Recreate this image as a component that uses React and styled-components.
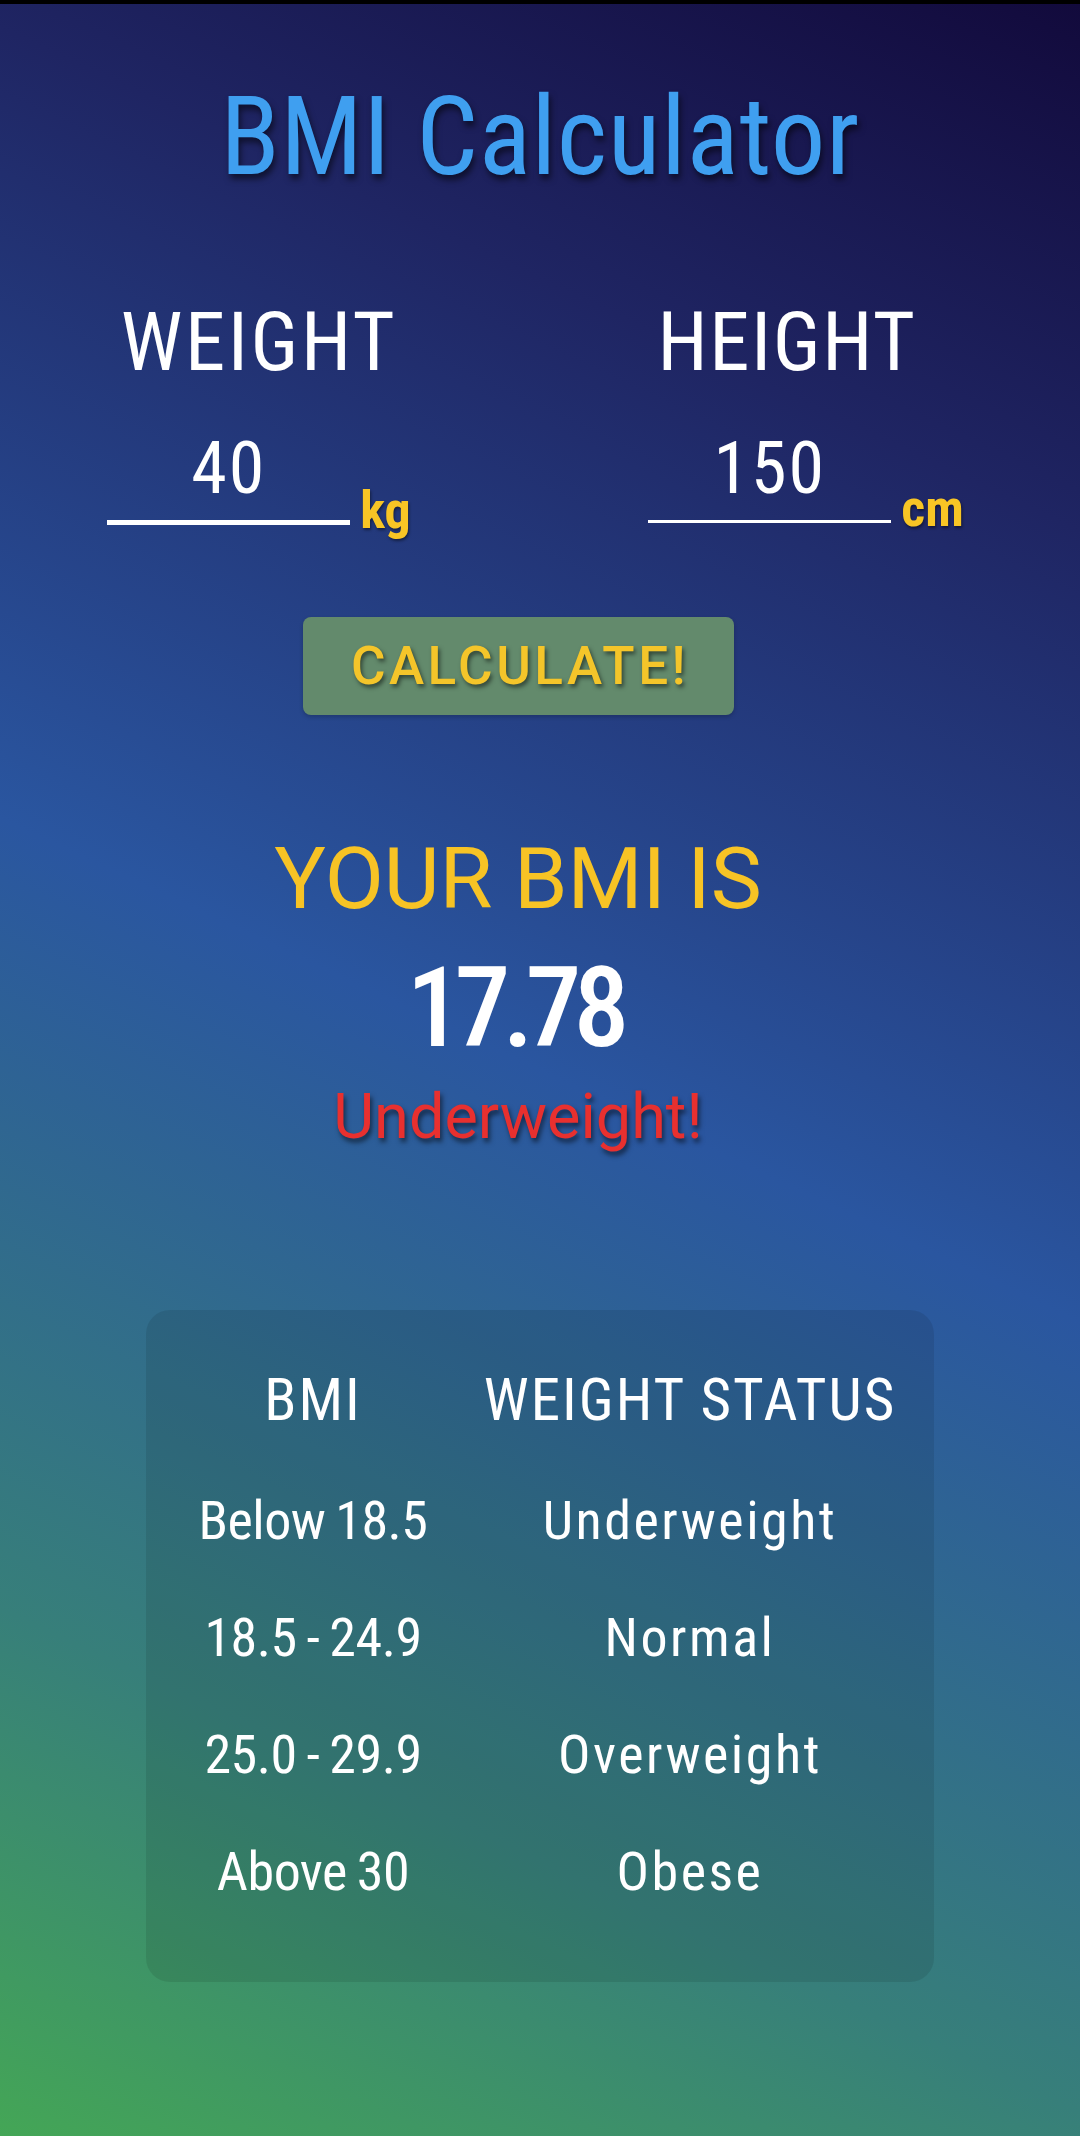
import React, { useState } from "react";
import styled, { createGlobalStyle } from "styled-components";

const NARROW = `"Roboto Condensed", "Liberation Sans Narrow", "DejaVu Sans Condensed", "Liberation Sans", sans-serif`;
const ROBOTO = `Roboto, "Liberation Sans", sans-serif`;

const GlobalStyle = createGlobalStyle`
  *, *::before, *::after { box-sizing: border-box; }
  html, body { margin: 0; padding: 0; }
  body { font-family: ${ROBOTO}; background: #120a3c; }
`;

const Page = styled.div`
  min-height: 100vh;
  border-top: 4px solid #000;
  background: linear-gradient(25deg, #44a656 0%, #377f7a 20%, #2a56a0 50%, #1f2563 80%, #120a3c 100%);
  display: flex;
  flex-direction: column;
  align-items: center;
  padding-bottom: 150px;
`;

const Title = styled.h1`
  margin: 79px 0 0;
  font-family: ${NARROW};
  font-weight: 400;
  font-size: 109px;
  line-height: 1;
  letter-spacing: 0.5px;
  color: #3f9ff0;
  text-shadow: 2px 5px 6px rgba(0, 0, 0, 0.55);
`;

const Main = styled.main`
  align-self: stretch;
  padding-right: 44px;
  display: flex;
  flex-direction: column;
  align-items: center;
`;

const Fields = styled.div`
  align-self: stretch;
  margin-top: 110px;
  display: grid;
  grid-template-columns: 1fr 1fr;
`;

const Field = styled.div`
  display: flex;
  flex-direction: column;
  align-items: center;
  padding-left: ${(p) => p.$offset || 0}px;
`;

const Label = styled.label`
  font-family: ${NARROW};
  font-size: 81px;
  line-height: 1;
  letter-spacing: ${(p) => p.$spacing ?? 2.5}px;
  color: #fff;
`;

const InputRow = styled.div`
  margin-top: 49px;
  margin-left: ${(p) => p.$nudge || 0}px;
  display: flex;
  align-items: flex-end;
  gap: 10px;
`;

const NumberInput = styled.input`
  width: 243px;
  height: ${(p) => 88 + p.$line}px;
  padding: 0 0 16px;
  border: none;
  border-bottom: ${(p) => p.$line}px solid #fff;
  background: transparent;
  outline: none;
  color: #fff;
  font-family: ${NARROW};
  font-size: 72px;
  line-height: 72px;
  letter-spacing: 2px;
  text-align: center;
`;

const Unit = styled.span`
  margin-bottom: -12px;
  font-family: ${NARROW};
  font-weight: 700;
  font-size: 52px;
  line-height: 1;
  color: #f8c525;
  text-shadow: 1px 2px 3px rgba(0, 0, 0, 0.45);
`;

const CalcButton = styled.button`
  margin-top: 92px;
  width: 431px;
  height: 98px;
  display: flex;
  align-items: center;
  justify-content: center;
  border: none;
  border-radius: 8px;
  background: #638a6c;
  box-shadow: 0 2px 4px rgba(0, 0, 0, 0.2);
  cursor: pointer;
  font-family: ${ROBOTO};
  font-weight: 500;
  font-size: 53px;
  line-height: 1;
  letter-spacing: 3.5px;
  padding: 0 0 0 4px;
  color: #f4c52a;
  text-shadow: 2px 3px 4px rgba(0, 0, 0, 0.5);
`;

const ResultLabel = styled.h2`
  margin: 121px 0 0;
  font-family: ${ROBOTO};
  font-weight: 400;
  font-size: 86px;
  line-height: 1;
  color: #f7c325;
`;

const ResultValue = styled.div`
  margin-top: 30px;
  font-family: ${NARROW};
  font-weight: 500;
  font-size: 112px;
  line-height: 1;
  letter-spacing: -8px;
  padding-right: 8px;
  color: #fff;
`;

const ResultStatus = styled.div`
  margin-top: 21px;
  font-family: ${ROBOTO};
  font-size: 63px;
  line-height: 1;
  color: ${(p) => p.$color};
  text-shadow: 2px 4px 5px rgba(0, 0, 0, 0.55);
`;

const Card = styled.section`
  margin-top: 162px;
  width: 788px;
  padding: 60px 0 83px 34px;
  border-radius: 24px;
  background: rgba(0, 0, 0, 0.09);
  display: grid;
  grid-template-columns: 266px 1fr;
  row-gap: 63px;
`;

const HeadCell = styled.div`
  margin-bottom: 2px;
  text-align: center;
  font-family: ${NARROW};
  font-size: 59px;
  line-height: 1;
  letter-spacing: 2px;
  color: #fff;
`;

const Cell = styled.div`
  text-align: center;
  font-family: ${NARROW};
  font-size: 54px;
  line-height: 1;
  letter-spacing: ${(p) => (p.$wide ? 2.5 : -0.5)}px;
  word-spacing: ${(p) => (p.$wide ? 0 : -2)}px;
  color: #fff;
`;

const RANGES = [
  ["Below 18.5", "Underweight"],
  ["18.5 - 24.9", "Normal"],
  ["25.0 - 29.9", "Overweight"],
  ["Above 30", "Obese"],
];

function classify(bmi) {
  if (bmi < 18.5) return { text: "Underweight!", color: "#e8302f" };
  if (bmi < 25) return { text: "Normal!", color: "#4caf50" };
  if (bmi < 30) return { text: "Overweight!", color: "#ff9800" };
  return { text: "Obese!", color: "#e8302f" };
}

export default function App() {
  const [weight, setWeight] = useState("40");
  const [height, setHeight] = useState("150");
  const [bmi, setBmi] = useState(40 / (1.5 * 1.5));

  const calculate = () => {
    const w = parseFloat(weight);
    const h = parseFloat(height) / 100;
    if (w > 0 && h > 0) setBmi(w / (h * h));
  };

  const status = classify(bmi);

  return (
    <>
      <GlobalStyle />
      <Page>
        <Title>BMI Calculator</Title>
        <Main>
          <Fields>
            <Field>
              <Label htmlFor="weight">WEIGHT</Label>
              <InputRow>
                <NumberInput
                  id="weight"
                  inputMode="decimal"
                  $line={5}
                  value={weight}
                  onChange={(e) => setWeight(e.target.value)}
                />
                <Unit>kg</Unit>
              </InputRow>
            </Field>
            <Field $offset={20}>
              <Label htmlFor="height" $spacing={1.5}>HEIGHT</Label>
              <InputRow $nudge={38}>
                <NumberInput
                  id="height"
                  inputMode="decimal"
                  $line={3}
                  value={height}
                  onChange={(e) => setHeight(e.target.value)}
                />
                <Unit>cm</Unit>
              </InputRow>
            </Field>
          </Fields>
          <CalcButton onClick={calculate}>CALCULATE!</CalcButton>
          <ResultLabel>YOUR BMI IS</ResultLabel>
          <ResultValue>{bmi.toFixed(2)}</ResultValue>
          <ResultStatus $color={status.color}>{status.text}</ResultStatus>
        </Main>
        <Card>
          <HeadCell>BMI</HeadCell>
          <HeadCell>WEIGHT STATUS</HeadCell>
          {RANGES.map(([range, label]) => (
            <React.Fragment key={range}>
              <Cell>{range}</Cell>
              <Cell $wide>{label}</Cell>
            </React.Fragment>
          ))}
        </Card>
      </Page>
    </>
  );
}
